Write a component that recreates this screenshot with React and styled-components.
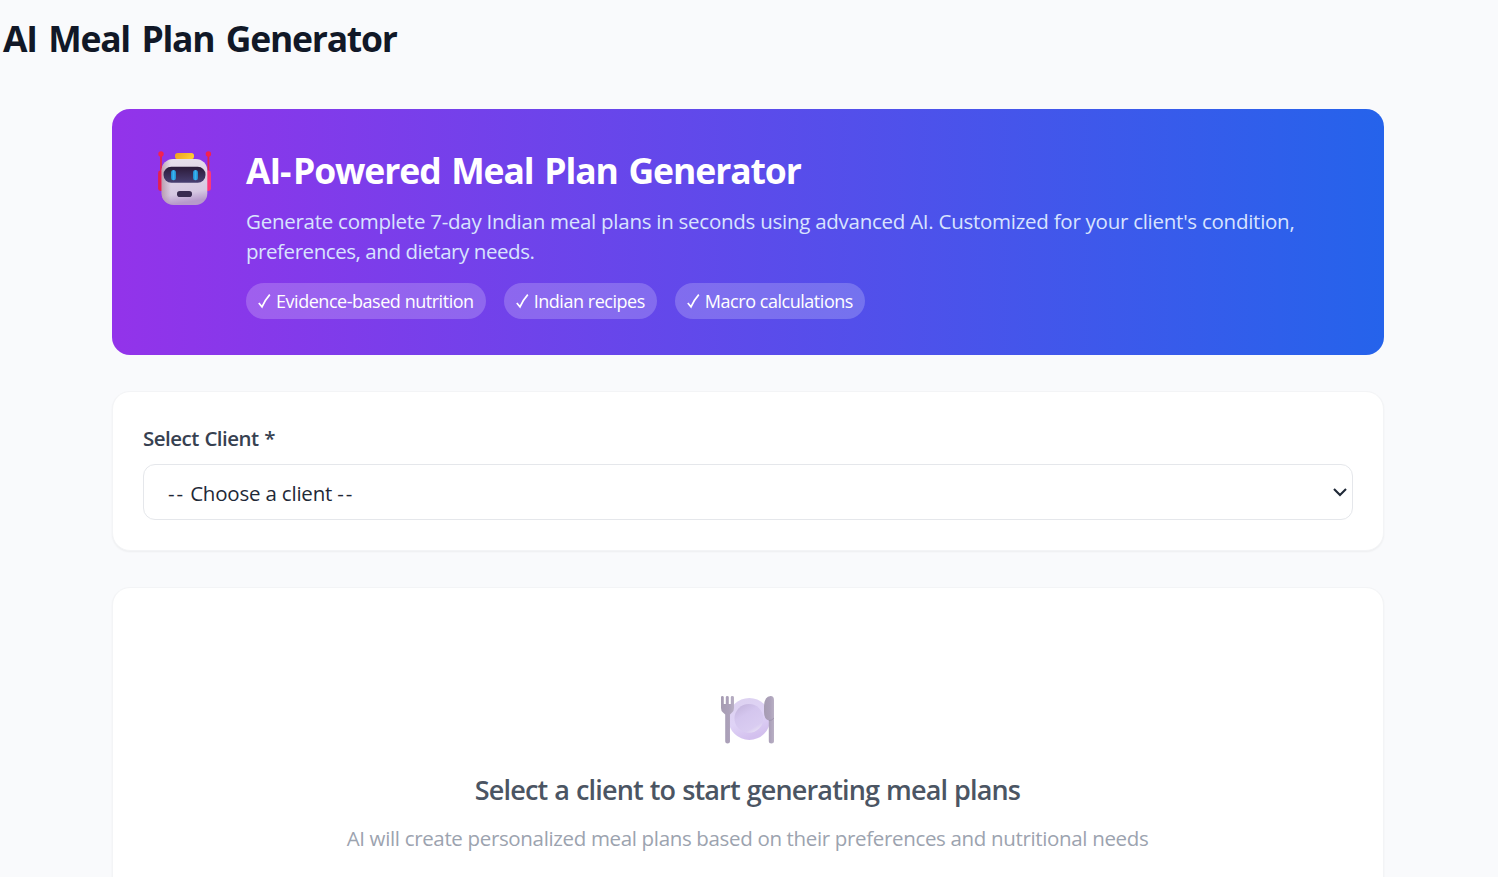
import React from "react";
import styled, { createGlobalStyle } from "styled-components";

const GlobalStyle = createGlobalStyle`
  * {
    box-sizing: border-box;
  }

  body {
    margin: 0;
    background: #f9fafc;
    font-family: "Open Sans", "Noto Sans", sans-serif;
    overflow: hidden;
  }

  h1, h2, h3, p {
    margin: 0;
    white-space: nowrap;
  }

  svg {
    display: block;
    flex-shrink: 0;
  }
`;

const Page = styled.div`
  height: 877px;
  overflow: hidden;
  background: #f9fafc;
`;

const Header = styled.header`
  height: 109px;
  padding: 18px 3px 0;
`;

const PageTitle = styled.h1`
  font-size: 35.5px;
  line-height: 40px;
  font-weight: 700;
  letter-spacing: -1.25px;
  word-spacing: 3.5px;
  color: #111827;
`;

const Content = styled.main`
  width: 1272px;
  margin-left: 112px;
  display: flex;
  flex-direction: column;
  gap: 36px;
`;

const Banner = styled.section`
  height: 246px;
  padding: 36px;
  display: flex;
  border-radius: 18px;
  background: linear-gradient(to right, #9333ea, #2563eb);
  color: #fff;
`;

const BannerIcon = styled.div`
  width: 98px;
  padding: 5px 0 0 9px;
`;

const BannerTitle = styled.h2`
  padding-top: 5px;
  font-size: 35.5px;
  line-height: 40px;
  font-weight: 700;
  letter-spacing: -1.08px;
  word-spacing: 2.5px;
`;

const Hyphen = styled.span`
  letter-spacing: 1.4px;
`;

const BannerText = styled.p`
  margin-top: 16px;
  font-size: 20.5px;
  line-height: 30px;
  letter-spacing: -0.26px;
  color: #d8e3fe;
`;

const LastLine = styled.span`
  letter-spacing: -0.44px;
`;

const Chips = styled.div`
  margin-top: 17px;
  display: flex;
  gap: 18px;
`;

const Chip = styled.span`
  height: 36px;
  padding: 0 12px;
  display: flex;
  align-items: center;
  gap: 5px;
  border-radius: 18px;
  background: rgba(255, 255, 255, 0.2);
  font-size: 18px;
  letter-spacing: -0.465px;
  white-space: nowrap;
`;

const Card = styled.section`
  height: ${(props) => props.$height};
  padding: 30px;
  border: 1px solid #f3f4f6;
  border-radius: 18px;
  background: #fff;
  box-shadow: 0 1px 2px rgba(0, 0, 0, 0.05);
`;

const Label = styled.label`
  display: block;
  height: 42px;
  font-size: 20.5px;
  line-height: 33px;
  font-weight: 600;
  letter-spacing: -0.52px;
  word-spacing: 0.8px;
  color: #374151;
`;

const SelectBox = styled.div`
  height: 56px;
  padding: 2px 4px 0 24px;
  display: flex;
  align-items: center;
  justify-content: space-between;
  border: 1px solid #e5e7eb;
  border-radius: 12px;
  color: #1f2937;
  font-size: 20.5px;
  letter-spacing: -0.2px;
`;

const Dashes = styled.span`
  letter-spacing: 1.9px;
`;

const Empty = styled.div`
  padding-top: 76px;
  display: flex;
  flex-direction: column;
  align-items: center;
`;

const EmptyTitle = styled.h3`
  margin-top: 26px;
  padding-right: 1px;
  font-size: 27px;
  line-height: 36px;
  font-weight: 600;
  letter-spacing: -0.85px;
  word-spacing: 0.8px;
  color: #4b5563;
`;

const EmptyText = styled.p`
  margin-top: 15px;
  padding-right: 1px;
  font-size: 20.5px;
  line-height: 30px;
  letter-spacing: -0.34px;
  color: #9ca3af;
`;

const CheckIcon = () => (
  <svg width="13" height="16" viewBox="0 0 13 16" fill="none">
    <path d="M0.8 10 L4 13.8 Q7 7 11.8 1.6" stroke="#fff" strokeWidth="1.7" />
  </svg>
);

const ChevronIcon = () => (
  <svg width="16" height="12" viewBox="0 0 16 12" fill="none">
    <path d="M2 2 L8 8 L14 2" stroke="#1f2937" strokeWidth="2.1" />
  </svg>
);

const RobotIcon = () => (
  <svg width="56" height="56" viewBox="0 0 56 56">
    <defs>
      <linearGradient id="head" x1="0" y1="0" x2="0.15" y2="1">
        <stop offset="0" stopColor="#e8e2ec" />
        <stop offset="0.8" stopColor="#d6c8e2" />
        <stop offset="1" stopColor="#b79acb" />
      </linearGradient>
      <linearGradient id="headSide" x1="0" y1="0" x2="1" y2="0">
        <stop offset="0" stopColor="#b08fa0" stopOpacity="0.75" />
        <stop offset="0.2" stopColor="#b08fa0" stopOpacity="0" />
      </linearGradient>
      <linearGradient id="visor" x1="0" y1="0" x2="0" y2="1">
        <stop offset="0" stopColor="#2b1a38" />
        <stop offset="1" stopColor="#483f72" />
      </linearGradient>
      <linearGradient id="eye" x1="0" y1="0" x2="1" y2="0">
        <stop offset="0" stopColor="#1f86cc" />
        <stop offset="0.5" stopColor="#38b5f0" />
        <stop offset="1" stopColor="#2288c8" />
      </linearGradient>
      <linearGradient id="hat" x1="0" y1="0" x2="1" y2="0.3">
        <stop offset="0" stopColor="#ec9f22" />
        <stop offset="1" stopColor="#fccc33" />
      </linearGradient>
    </defs>
    <path d="M4 4 V22 M51.4 4 V22" stroke="#e0264f" strokeWidth="1.8" />
    <circle cx="4" cy="4" r="2.7" fill="#f5214f" />
    <circle cx="51.4" cy="4" r="2.7" fill="#f5214f" />
    <rect x="1.1" y="20.5" width="6" height="20.5" rx="2.4" fill="#e4204f" />
    <rect x="48.4" y="20.5" width="5.6" height="20.5" rx="2.4" fill="#fb3778" />
    <rect x="4.7" y="9" width="45.6" height="45.9" rx="11.5" fill="url(#head)" />
    <rect x="4.7" y="9" width="45.6" height="45.9" rx="11.5" fill="url(#headSide)" />
    <rect x="18" y="3" width="19" height="6" rx="2.6" fill="url(#hat)" />
    <rect x="6.5" y="16.7" width="42" height="16" rx="7.8" fill="url(#visor)" />
    <rect x="14" y="20" width="5" height="10.2" rx="2.5" fill="url(#eye)" />
    <rect x="36" y="20" width="5" height="10.2" rx="2.5" fill="url(#eye)" />
    <rect x="20" y="41" width="15" height="6" rx="2.8" fill="#3a2c50" />
  </svg>
);

const PlateIcon = () => (
  <svg width="56" height="52" viewBox="0 0 56 52">
    <defs>
      <linearGradient id="plate" x1="0" y1="0" x2="0.4" y2="1">
        <stop offset="0" stopColor="#dcd1ef" />
        <stop offset="0.6" stopColor="#dfd3f6" />
        <stop offset="1" stopColor="#d3c0ee" />
      </linearGradient>
      <linearGradient id="well" x1="0.2" y1="0" x2="0.8" y2="1">
        <stop offset="0" stopColor="#c4b5dd" />
        <stop offset="0.35" stopColor="#d4c6ee" />
        <stop offset="0.8" stopColor="#d9ccf1" />
        <stop offset="1" stopColor="#ece7f4" />
      </linearGradient>
      <linearGradient id="metal" x1="0" y1="0" x2="1" y2="0">
        <stop offset="0" stopColor="#a69cb2" />
        <stop offset="0.6" stopColor="#aca1ba" />
        <stop offset="1" stopColor="#b9b0c4" />
      </linearGradient>
    </defs>
    <circle cx="29.3" cy="24.9" r="21" fill="url(#plate)" />
    <circle cx="28.9" cy="24.4" r="14.4" fill="url(#well)" />
    <path
      d="M1 3.2 Q1 2 2.2 2 Q3.8 2 3.8 3.2 V10 H5.8 V3.2 Q5.8 2 7.2 2 Q8.8 2 8.8 3.2 V10 H10.8 V3.2 Q10.8 2 12.2 2 Q14 2 14 3.4 V14 Q14 17 12 18.6 L10 20.6 V47.4 Q10 49.4 7.6 49.4 Q5.2 49.4 5.2 47.4 V20.6 L3 18.6 Q1 17 1 14 Z"
      fill="url(#metal)"
    />
    <path d="M44 12 Q44.6 2 50.6 2 Q54 2 54 6 V47.4 Q54 49.4 51.4 49.4 Q48.8 49.4 48.8 47.4 V26.6 Q44 25 44 18 Z" fill="url(#metal)" />
    <path d="M49 26.6 Q52 26.6 54 24" stroke="#978ca6" strokeWidth="0.7" fill="none" />
  </svg>
);

const tags = ["Evidence-based nutrition", "Indian recipes", "Macro calculations"];

const App = () => {
  return (
    <Page>
      <GlobalStyle />
      <Header>
        <PageTitle>AI Meal Plan Generator</PageTitle>
      </Header>
      <Content>
        <Banner>
          <BannerIcon>
            <RobotIcon />
          </BannerIcon>
          <div>
            <BannerTitle>
              AI<Hyphen>-</Hyphen>Powered Meal Plan Generator
            </BannerTitle>
            <BannerText>
              Generate complete 7-day Indian meal plans in seconds using advanced AI. Customized for your client's condition,
              <br />
              <LastLine>preferences, and dietary needs.</LastLine>
            </BannerText>
            <Chips>
              {tags.map((tag) => (
                <Chip key={tag}>
                  <CheckIcon />
                  {tag}
                </Chip>
              ))}
            </Chips>
          </div>
        </Banner>
        <Card $height="160px">
          <Label>Select Client *</Label>
          <SelectBox>
            <span>
              <Dashes>--</Dashes> Choose a client <Dashes>--</Dashes>
            </span>
            <ChevronIcon />
          </SelectBox>
        </Card>
        <Card $height="330px">
          <Empty>
            <PlateIcon />
            <EmptyTitle>Select a client to start generating meal plans</EmptyTitle>
            <EmptyText>AI will create personalized meal plans based on their preferences and nutritional needs</EmptyText>
          </Empty>
        </Card>
      </Content>
    </Page>
  );
};

export default App;
